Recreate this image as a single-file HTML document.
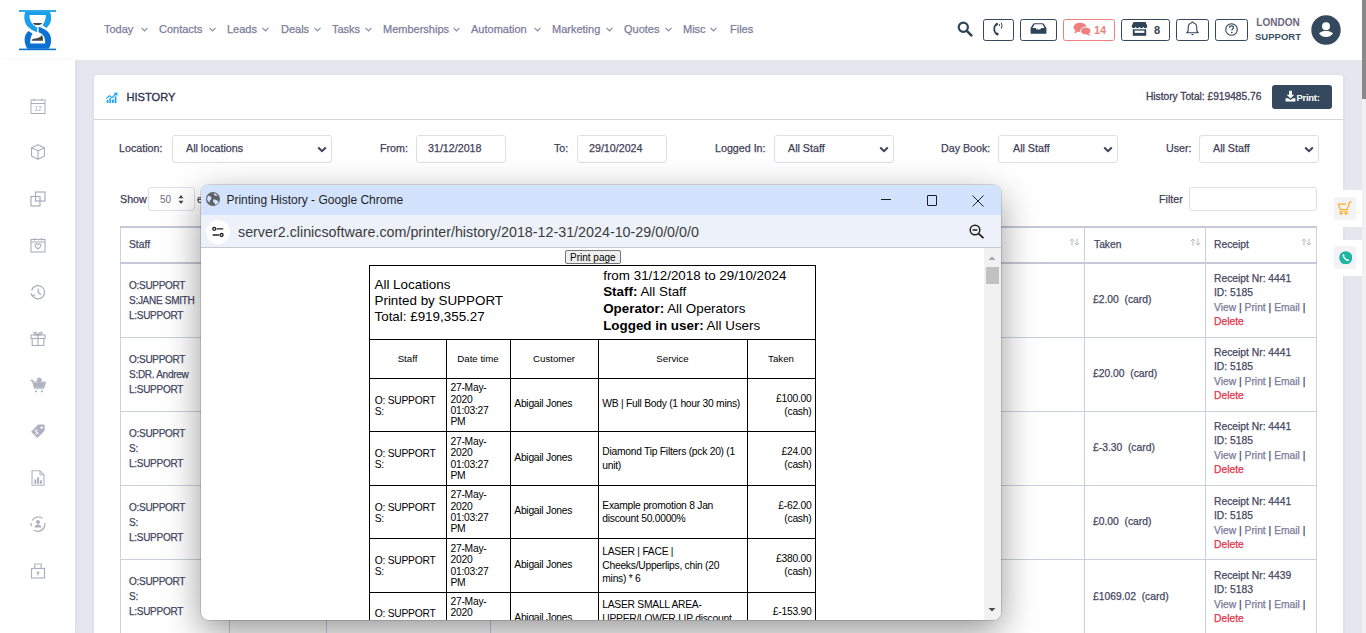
<!DOCTYPE html>
<html><head><meta charset="utf-8">
<style>
*{box-sizing:border-box;margin:0;padding:0}
html,body{width:1366px;height:633px;overflow:hidden}
body{position:relative;background:#e5e7ef;font-family:"Liberation Sans",sans-serif;color:#454862}
.abs{position:absolute}
#hdr{position:absolute;left:0;top:0;width:1362px;height:60px;background:#fff}
#side{position:absolute;left:0;top:60px;width:75px;height:573px;background:#fff;box-shadow:1px 0 4px rgba(60,60,90,0.06)}
#sb{position:absolute;left:1362px;top:0;width:4px;height:633px;background:#f1f1f1}
#sbt{position:absolute;left:1362px;top:0;width:4px;height:99px;background:#888}
.nav{position:absolute;top:23px;font-size:11px;color:#7b7c9b;-webkit-text-stroke:0.25px #7b7c9b;white-space:nowrap;line-height:12px}
.chev{position:absolute;top:27px;width:7px;height:5px}
.hbox{position:absolute;top:19px;height:22px;border:1.5px solid #34495e;border-radius:2.5px}
.card{position:absolute;left:94px;top:75px;width:1249px;height:600px;background:#fff;border-radius:3px;box-shadow:0 0 4px rgba(60,60,90,0.07)}
.lbl{position:absolute;font-size:10.7px;color:#3f4158;-webkit-text-stroke:0.25px currentColor;white-space:nowrap;line-height:12px}
.inp{position:absolute;top:135px;height:28px;border:1px solid #dcdfe8;border-radius:3px;background:#fff}
.inp span{position:absolute;top:6px;font-size:10.7px;color:#3f4158;-webkit-text-stroke:0.25px currentColor;white-space:nowrap;line-height:12px}
.selchev{position:absolute;top:10px;width:10px;height:7px}
.vl{position:absolute;width:1px;background:#cbcfdb}
.hl{position:absolute;height:1px;background:#cbcfdb}
.cell{position:absolute;font-size:10px;letter-spacing:-0.28px;line-height:14.9px;color:#454862;-webkit-text-stroke:0.25px currentColor;white-space:nowrap}
.rc{position:absolute;font-size:10.3px;line-height:14.6px;color:#454862;-webkit-text-stroke:0.25px currentColor;white-space:nowrap}
.rc .lk{color:#7b7c9b;-webkit-text-stroke:0.25px #7b7c9b}
.rc .dl{color:#e2334b;-webkit-text-stroke:0.25px #e2334b}
.sic{position:absolute;left:30px;width:16px;height:16px}
</style></head><body>
<div id="hdr"></div>
<div id="side"></div>
<div id="sb"></div><div id="sbt"></div>

<!-- logo -->
<svg class="abs" style="left:18px;top:8px" width="40" height="44" viewBox="0 0 40 44">
  <rect x="1" y="2.1" width="37" height="1.8" fill="#1b9fe9"/>
  <rect x="1" y="40.6" width="37" height="1.6" fill="#0a70d1"/>
  <path fill-rule="evenodd" fill="#1b9fe9" d="M7.2 3.8 L31.8 3.8 C33.3 6.5 33.6 11 32.6 13.8 C31.7 16.5 30.2 18.5 28.4 20 L24.4 17.2 C26.8 14.5 27.8 11 27.8 7 L11.5 7 C11.5 11 12.5 14.5 15.5 17 C17 18.2 18.3 19 19.3 19.6 L19 24.2 C15 22.8 11 20.5 8.6 17.2 C6 13.5 5.8 7.5 7.2 3.8 Z"/>
  <path fill-rule="evenodd" fill="#0a70d1" d="M20.6 18.8 C25 20 29.5 22.5 31.6 26 C33.3 29 33.5 33 32.6 36.2 C32 38.3 31.3 39.7 30.6 40.7 L9.4 40.7 C8.7 39.7 8 38.3 7.4 36.2 C6.3 33 6.2 28 8.5 25.5 C9 24.6 9.8 23.7 10.5 23.1 L14.6 25.8 C12.9 28 12.2 31 12.2 35.5 L27.2 35.5 C27.2 31 26.5 28 24 26 C23 25.2 21.7 24.6 20.6 24.2 Z"/>
  <path d="M14.8 14.9 L24.2 14.9 C23.2 16.4 21.5 17.1 19.5 17.1 C17.5 17.1 15.8 16.4 14.8 14.9 Z" fill="#454545"/>
  <path d="M13.6 32.8 C13.9 31.4 15 30.9 17 30.6 C20 30.2 22.6 29.2 24 27 C24.8 28.8 25.1 30.8 25.1 32.8 Z" fill="#454545"/>
</svg>

<!-- nav -->
<div class="nav" style="left:104px">Today</div>
<div class="nav" style="left:159px">Contacts</div>
<div class="nav" style="left:227px">Leads</div>
<div class="nav" style="left:281px">Deals</div>
<div class="nav" style="left:332px">Tasks</div>
<div class="nav" style="left:383px">Memberships</div>
<div class="nav" style="left:471px">Automation</div>
<div class="nav" style="left:552px">Marketing</div>
<div class="nav" style="left:624px">Quotes</div>
<div class="nav" style="left:683px">Misc</div>
<div class="nav" style="left:730px">Files</div>
<svg class="chev" style="left:141px" viewBox="0 0 7 5"><path d="M0.5 0.8 L3.5 3.8 L6.5 0.8" fill="none" stroke="#8a8ba6" stroke-width="1.2"/></svg>
<svg class="chev" style="left:209px" viewBox="0 0 7 5"><path d="M0.5 0.8 L3.5 3.8 L6.5 0.8" fill="none" stroke="#8a8ba6" stroke-width="1.2"/></svg>
<svg class="chev" style="left:262px" viewBox="0 0 7 5"><path d="M0.5 0.8 L3.5 3.8 L6.5 0.8" fill="none" stroke="#8a8ba6" stroke-width="1.2"/></svg>
<svg class="chev" style="left:314px" viewBox="0 0 7 5"><path d="M0.5 0.8 L3.5 3.8 L6.5 0.8" fill="none" stroke="#8a8ba6" stroke-width="1.2"/></svg>
<svg class="chev" style="left:365px" viewBox="0 0 7 5"><path d="M0.5 0.8 L3.5 3.8 L6.5 0.8" fill="none" stroke="#8a8ba6" stroke-width="1.2"/></svg>
<svg class="chev" style="left:453px" viewBox="0 0 7 5"><path d="M0.5 0.8 L3.5 3.8 L6.5 0.8" fill="none" stroke="#8a8ba6" stroke-width="1.2"/></svg>
<svg class="chev" style="left:534px" viewBox="0 0 7 5"><path d="M0.5 0.8 L3.5 3.8 L6.5 0.8" fill="none" stroke="#8a8ba6" stroke-width="1.2"/></svg>
<svg class="chev" style="left:606px" viewBox="0 0 7 5"><path d="M0.5 0.8 L3.5 3.8 L6.5 0.8" fill="none" stroke="#8a8ba6" stroke-width="1.2"/></svg>
<svg class="chev" style="left:665px" viewBox="0 0 7 5"><path d="M0.5 0.8 L3.5 3.8 L6.5 0.8" fill="none" stroke="#8a8ba6" stroke-width="1.2"/></svg>
<svg class="chev" style="left:710px" viewBox="0 0 7 5"><path d="M0.5 0.8 L3.5 3.8 L6.5 0.8" fill="none" stroke="#8a8ba6" stroke-width="1.2"/></svg>

<!-- HEADER_RIGHT -->
<svg class="abs" style="left:957px;top:21px" width="16" height="16" viewBox="0 0 16 16"><circle cx="6.3" cy="6.3" r="4.6" fill="none" stroke="#2f4358" stroke-width="2.2"/><path d="M9.6 9.6 L14.3 14.3" stroke="#2f4358" stroke-width="2.6" stroke-linecap="round"/></svg>
<div class="hbox" style="left:983px;width:31px"></div>
<div class="hbox" style="left:1020px;width:37px"></div>
<div class="hbox" style="left:1063px;width:52px;border-color:#f07f7f"></div>
<div class="hbox" style="left:1121px;width:49px"></div>
<div class="hbox" style="left:1176px;width:33px"></div>
<div class="hbox" style="left:1215px;width:33px"></div>
<!-- phone -->
<svg class="abs" style="left:992px;top:21px" width="14" height="16" viewBox="0 0 14 16"><path d="M4.6 3.2 C1.6 4.8 1.2 10.8 5 13.2" fill="none" stroke="#2f4358" stroke-width="1.7"/><ellipse cx="4.7" cy="3.3" rx="1.5" ry="1.3" transform="rotate(-30 4.7 3.3)" fill="#2f4358"/><ellipse cx="5.2" cy="13" rx="1.5" ry="1.3" transform="rotate(30 5.2 13)" fill="#2f4358"/><path d="M7.3 3.2 Q8.1 4 7.3 5 M9.3 1.8 Q10.8 4.6 9.3 7.6" fill="none" stroke="#2f4358" stroke-width="1"/></svg>
<!-- inbox -->
<svg class="abs" style="left:1030px;top:22px" width="17" height="14" viewBox="0 0 17 14"><path d="M4.5 1.2 L12.5 1.2 C13.2 1.2 13.6 1.5 13.9 2 L16.4 6 L16.4 11.8 L0.6 11.8 L0.6 6 L3.1 2 C3.4 1.5 3.8 1.2 4.5 1.2 Z" fill="#2f4358"/><path d="M4.6 2.3 L12.4 2.3 L14.6 6.1 L11.2 6.1 L10.3 7.6 L6.7 7.6 L5.8 6.1 L2.4 6.1 Z" fill="#fff"/></svg>
<!-- chat -->
<svg class="abs" style="left:1072px;top:21px" width="22" height="17" viewBox="0 0 22 17"><ellipse cx="8" cy="6.3" rx="6.5" ry="4.6" fill="#f07f7f"/><path d="M3.5 9.5 L2.2 12.5 L6.5 10.5 Z" fill="#f07f7f"/><ellipse cx="13.8" cy="10" rx="5.2" ry="3.9" fill="#f07f7f" stroke="#fff" stroke-width="1"/><path d="M16.5 12.5 L18.8 15.3 L14.5 13.5 Z" fill="#f07f7f"/></svg>
<div class="abs" style="left:1094px;top:24px;font-size:11px;font-weight:bold;line-height:12px;color:#f07f7f">14</div>
<!-- store -->
<svg class="abs" style="left:1131px;top:21px" width="17" height="16" viewBox="0 0 17 16"><path d="M2.5 1 L14.5 1 L16.3 5 C16.3 6.5 15.2 7.2 14.2 7.2 C13.2 7.2 12.6 6.5 12.4 5.8 C12.1 6.6 11.2 7.2 10.3 7.2 C9.4 7.2 8.7 6.6 8.5 5.8 C8.3 6.6 7.5 7.2 6.6 7.2 C5.7 7.2 4.9 6.6 4.7 5.8 C4.4 6.6 3.7 7.2 2.8 7.2 C1.8 7.2 0.7 6.5 0.7 5 Z" fill="#2f4358"/><path d="M1.8 8.3 L15.2 8.3 L15.2 14.8 L1.8 14.8 Z" fill="#2f4358"/><rect x="3.6" y="9.6" width="9.8" height="2.3" fill="#fff"/></svg>
<div class="abs" style="left:1154px;top:24px;font-size:11px;font-weight:bold;line-height:12px;color:#2f4358">8</div>
<!-- bell -->
<svg class="abs" style="left:1185px;top:21px" width="15" height="16" viewBox="0 0 15 16"><path d="M7.5 1 C7.9 1 8.2 1.3 8.2 1.8 C10.5 2.3 11.8 4.2 11.8 6.8 L11.8 9.8 L13.3 11.8 L1.7 11.8 L3.2 9.8 L3.2 6.8 C3.2 4.2 4.5 2.3 6.8 1.8 C6.8 1.3 7.1 1 7.5 1 Z" fill="none" stroke="#2f4358" stroke-width="1.1" stroke-linejoin="round"/><path d="M6 13 L9 13 L7.5 14.6 Z" fill="#2f4358"/></svg>
<!-- help -->
<svg class="abs" style="left:1224px;top:22px" width="15" height="15" viewBox="0 0 15 15"><circle cx="7.5" cy="7.5" r="5.8" fill="none" stroke="#2f4358" stroke-width="1.1"/><path d="M5.5 5.8 C5.5 4.4 6.4 3.8 7.5 3.8 C8.6 3.8 9.5 4.5 9.5 5.6 C9.5 6.9 7.8 7 7.8 8.6" fill="none" stroke="#2f4358" stroke-width="1.2"/><circle cx="7.8" cy="10.6" r="0.8" fill="#2f4358"/></svg>
<div class="abs" style="left:1253px;top:16.5px;width:50px;text-align:center;font-size:10px;font-weight:bold;line-height:12px;color:#6b6880">LONDON</div>
<div class="abs" style="left:1253px;top:31px;width:50px;text-align:center;font-size:9.5px;font-weight:bold;line-height:12px;color:#3d5166">SUPPORT</div>
<svg class="abs" style="left:1311px;top:15px" width="30" height="30" viewBox="0 0 30 30"><circle cx="15" cy="15" r="14.7" fill="#34495e"/><circle cx="15" cy="11.2" r="4" fill="#fff"/><path d="M8 18.5 C10 16.5 12 16 15 16 C18 16 20 16.5 22 18.5 C20 21 18 22 15 22 C12 22 10 21 8 18.5 Z" fill="#fff"/></svg>

<!-- SIDEBAR -->
<svg class="sic" style="top:98px" viewBox="0 0 16 16" fill="none" stroke="#a9adbd" stroke-width="1"><rect x="1" y="2" width="14" height="13.5"/><path d="M1 5.5 H15 M4 0.5 V3 M12 0.5 V3"/><text x="8" y="13.3" font-size="6.5" text-anchor="middle" fill="#a9adbd" stroke="none" font-family="Liberation Sans">12</text></svg>
<svg class="sic" style="top:144px" viewBox="0 0 16 16" fill="none" stroke="#a9adbd" stroke-width="1.1" stroke-linejoin="round"><path d="M8 0.8 L14.5 3.8 L14.5 12 L8 15.2 L1.5 12 L1.5 3.8 Z M1.5 3.8 L8 6.8 L14.5 3.8 M8 6.8 V15.2"/></svg>
<svg class="sic" style="top:191px" viewBox="0 0 16 16" fill="none" stroke="#a9adbd" stroke-width="1.2"><rect x="1" y="5.5" width="9" height="9.5"/><rect x="5.5" y="1" width="9.5" height="9"/></svg>
<svg class="sic" style="top:237px" viewBox="0 0 16 16" fill="none" stroke="#a9adbd" stroke-width="1.1"><rect x="1" y="2.5" width="14" height="12.5"/><path d="M1 5 H15 M4.5 1 V3.5 M11.5 1 V3.5"/><path d="M8 12 C6 10.5 5 9.5 5 8.3 C5 7.3 5.8 6.8 6.5 6.8 C7.2 6.8 7.7 7.3 8 7.8 C8.3 7.3 8.8 6.8 9.5 6.8 C10.2 6.8 11 7.3 11 8.3 C11 9.5 10 10.5 8 12 Z"/></svg>
<svg class="sic" style="top:284px" viewBox="0 0 16 16" fill="none" stroke="#a9adbd" stroke-width="1.2"><path d="M2.2 11.5 A6.6 6.6 0 1 0 1.6 6.5"/><path d="M0.8 9.2 L2.2 12 L4.8 10.6" stroke-linejoin="round"/><path d="M8.3 4.5 V8.5 L11 10.8"/></svg>
<svg class="sic" style="top:330px" viewBox="0 0 16 16" fill="none" stroke="#a9adbd" stroke-width="1.1"><rect x="1" y="5" width="14" height="3.5"/><rect x="2.2" y="8.5" width="11.6" height="7"/><path d="M8 5 V15.5 M8 5 C6.5 2 3.5 1.5 4 3.5 C4.3 4.6 6.5 5 8 5 C9.5 5 11.7 4.6 12 3.5 C12.5 1.5 9.5 2 8 5"/></svg>
<svg class="sic" style="top:377px" viewBox="0 0 16 16"><path d="M0.5 3.5 H2.6 L4.6 11 H13.6 L15.3 5.2 H3.4" fill="none" stroke="#aeb1c1" stroke-width="1.3" stroke-linejoin="round"/><path d="M3.6 6 H14.6 L13.2 10.3 H4.7 Z" fill="#aeb1c1"/><circle cx="6" cy="14.3" r="1.1" fill="#aeb1c1"/><circle cx="12" cy="14.3" r="1.1" fill="#aeb1c1"/><circle cx="9.3" cy="3.2" r="2.1" fill="#aeb1c1"/><path d="M9.3 0.3 V6 M6.5 3.2 H12.1 M7.3 1.2 L11.3 5.2 M11.3 1.2 L7.3 5.2" stroke="#aeb1c1" stroke-width="0.9"/></svg>
<svg class="sic" style="top:423px" viewBox="0 0 16 16"><path d="M1 8.8 L7.5 2.3 C8 1.8 8.5 1.6 9.2 1.6 L13.6 1.6 C14.2 1.6 14.6 2 14.6 2.6 L14.6 7 C14.6 7.6 14.4 8.1 13.9 8.6 L7.4 15 Z" fill="#aeb1c1"/><circle cx="11.6" cy="4.6" r="1.2" fill="#fff"/><path d="M5 10.5 C6 11.5 7.6 11 7.4 9.8 C7.2 8.8 5.8 9.2 5.6 8.2 C5.4 7 7 6.5 8 7.5 M4.6 7.2 L8.6 11" fill="none" stroke="#fff" stroke-width="0.9"/></svg>
<svg class="sic" style="top:470px" viewBox="0 0 16 16"><path d="M2 0.8 H10 L14 4.8 V15.3 H2 Z" fill="none" stroke="#aeb1c1" stroke-width="1.1" stroke-linejoin="round"/><path d="M10 0.8 V4.8 H14" fill="none" stroke="#aeb1c1" stroke-width="1"/><rect x="4.3" y="9.5" width="2" height="4.3" fill="#aeb1c1"/><rect x="7.1" y="7.3" width="2" height="6.5" fill="#aeb1c1"/><rect x="9.9" y="10.3" width="2" height="3.5" fill="#aeb1c1"/></svg>
<svg class="sic" style="top:516px" viewBox="0 0 16 16"><path d="M2.2 4.5 A6.8 6.8 0 0 1 12.5 2.5 M14.6 7 A6.8 6.8 0 0 1 4 14 M1.4 10 A6.8 6.8 0 0 1 1.3 7" fill="none" stroke="#aeb1c1" stroke-width="1.3"/><circle cx="8" cy="6" r="2" fill="#aeb1c1"/><path d="M4.6 11.4 C4.8 9.4 6.2 8.6 8 8.6 C9.8 8.6 11.2 9.4 11.4 11.4 Z" fill="#aeb1c1"/></svg>
<svg class="sic" style="top:563px" viewBox="0 0 16 16" fill="none" stroke="#aeb1c1" stroke-width="1.2"><rect x="1.5" y="5.5" width="13" height="9.5"/><path d="M4.8 5.5 V1 H11.2 V5.5"/><path d="M8 12.5 V8.8 M6.6 10.2 L8 8.8 L9.4 10.2" stroke-width="1.1"/></svg>

<!-- CARD -->
<div class="card"></div>
<div class="hl" style="left:94px;top:119px;width:1249px;background:#d3d6e0"></div>
<svg class="abs" style="left:104.5px;top:91.8px" width="14" height="11.5" viewBox="0 0 15 13"><path d="M1 7.5 L4.5 4.3 L7.5 6.5 L12 2" fill="none" stroke="#1aa3f5" stroke-width="1.3"/><path d="M9.5 0.8 L13.8 0.5 L13.5 4.8 Z" fill="#1aa3f5"/><rect x="1.5" y="9" width="2" height="3.8" fill="#1aa3f5"/><rect x="4.5" y="7" width="2" height="5.8" fill="#1aa3f5"/><rect x="7.5" y="8.5" width="2" height="4.3" fill="#1aa3f5"/><rect x="10.5" y="5" width="2" height="7.8" fill="#1aa3f5"/></svg>
<div class="abs" style="left:126.5px;top:90.8px;font-size:11.1px;line-height:13px;color:#2f3150;-webkit-text-stroke:0.35px #2f3150">HISTORY</div>
<div class="abs" style="left:1146px;top:91px;font-size:10.2px;line-height:12px;color:#3f4158;-webkit-text-stroke:0.3px #3f4158">History Total: £919485.76</div>
<div class="abs" style="left:1272px;top:85px;width:60px;height:23.5px;background:#34495e;border-radius:3px"></div>
<svg class="abs" style="left:1285px;top:90px" width="11" height="12" viewBox="0 0 11 12"><path d="M4.1 0.8 H6.9 V4.8 H9.3 L5.5 8.6 L1.7 4.8 H4.1 Z" fill="#fff"/><path d="M0.6 8.2 H3 L5.5 10 L8 8.2 H10.4 V11.5 H0.6 Z" fill="#fff"/></svg>
<div class="abs" style="left:1296.5px;top:91.5px;font-size:9.5px;font-weight:bold;letter-spacing:-0.3px;line-height:12px;color:#fff">Print:</div>

<div class="lbl" style="left:119px;top:142px">Location:</div>
<div class="inp" style="left:172px;width:160px"><span style="left:13px">All locations</span><svg class="selchev" style="left:144px" viewBox="0 0 10 7"><path d="M1.2 1.5 L5 5.2 L8.8 1.5" fill="none" stroke="#3f4158" stroke-width="2"/></svg></div>
<div class="lbl" style="left:380px;top:142px">From:</div>
<div class="inp" style="left:416px;width:90px"><span style="left:11px">31/12/2018</span></div>
<div class="lbl" style="left:554px;top:142px">To:</div>
<div class="inp" style="left:577px;width:90px"><span style="left:11px">29/10/2024</span></div>
<div class="lbl" style="left:715px;top:142px">Logged In:</div>
<div class="inp" style="left:774px;width:120px"><span style="left:13px">All Staff</span><svg class="selchev" style="left:104px" viewBox="0 0 10 7"><path d="M1.2 1.5 L5 5.2 L8.8 1.5" fill="none" stroke="#3f4158" stroke-width="2"/></svg></div>
<div class="lbl" style="left:941px;top:142px">Day Book:</div>
<div class="inp" style="left:998px;width:120px"><span style="left:14px">All Staff</span><svg class="selchev" style="left:104px" viewBox="0 0 10 7"><path d="M1.2 1.5 L5 5.2 L8.8 1.5" fill="none" stroke="#3f4158" stroke-width="2"/></svg></div>
<div class="lbl" style="left:1166px;top:142px">User:</div>
<div class="inp" style="left:1199px;width:120px"><span style="left:13px">All Staff</span><svg class="selchev" style="left:104px" viewBox="0 0 10 7"><path d="M1.2 1.5 L5 5.2 L8.8 1.5" fill="none" stroke="#3f4158" stroke-width="2"/></svg></div>

<div class="lbl" style="left:120px;top:193px">Show</div>
<div class="inp" style="left:148px;top:187px;width:47px;height:24px"><span style="left:11px;top:5.5px;font-size:10px;color:#6a6d80;-webkit-text-stroke:0">50</span><svg class="abs" style="left:29px;top:6px" width="6" height="11" viewBox="0 0 6 11"><path d="M0.5 4.3 L3 1 L5.5 4.3 Z M0.5 6.7 L3 10 L5.5 6.7 Z" fill="#3f4158"/></svg></div>
<div class="lbl" style="left:197px;top:193px">entries</div>
<div class="lbl" style="left:1159px;top:193px">Filter</div>
<div class="inp" style="left:1189px;top:187px;width:128px;height:23.5px"></div>

<!-- app table -->
<div class="abs" style="left:120px;top:226px;width:1197px;height:420px;border-left:1px solid #cfd2de;border-right:1px solid #cfd2de"></div>
<div class="hl" style="left:120px;top:226px;width:1197px;height:2px;background:#c5c8d6"></div>
<div class="hl" style="left:120px;top:262px;width:1197px;height:2px;background:#c5c8d6"></div>
<div class="hl" style="left:120px;top:337px;width:1197px"></div>
<div class="hl" style="left:120px;top:411px;width:1197px"></div>
<div class="hl" style="left:120px;top:485px;width:1197px"></div>
<div class="hl" style="left:120px;top:559px;width:1197px"></div>
<div class="vl" style="left:229px;top:226px;height:420px"></div>
<div class="vl" style="left:326px;top:226px;height:420px"></div>
<div class="vl" style="left:490px;top:226px;height:420px"></div>
<div class="vl" style="left:1084px;top:226px;height:420px"></div>
<div class="vl" style="left:1205px;top:226px;height:420px"></div>
<div class="lbl" style="left:129px;top:238.5px;font-size:10.3px;color:#454862">Staff</div>
<div class="lbl" style="left:1094px;top:238.5px;font-size:10.3px;color:#454862">Taken</div>
<div class="lbl" style="left:1214px;top:238.5px;font-size:10.3px;color:#454862">Receipt</div>
<svg class="abs" style="left:1069px;top:238px" width="11" height="8" viewBox="0 0 11 8"><path d="M3 7.5 V1 M0.8 3.2 L3 1 L5.2 3.2 M8 0.5 V7 M5.8 4.8 L8 7 L10.2 4.8" fill="none" stroke="#b6b9c6" stroke-width="1"/></svg>
<svg class="abs" style="left:1190px;top:238px" width="11" height="8" viewBox="0 0 11 8"><path d="M3 7.5 V1 M0.8 3.2 L3 1 L5.2 3.2 M8 0.5 V7 M5.8 4.8 L8 7 L10.2 4.8" fill="none" stroke="#b6b9c6" stroke-width="1"/></svg>
<svg class="abs" style="left:1301px;top:238px" width="11" height="8" viewBox="0 0 11 8"><path d="M3 7.5 V1 M0.8 3.2 L3 1 L5.2 3.2 M8 0.5 V7 M5.8 4.8 L8 7 L10.2 4.8" fill="none" stroke="#b6b9c6" stroke-width="1"/></svg>

<div class="cell" style="left:129px;top:279px">O:SUPPORT<br>S:JANE SMITH<br>L:SUPPORT</div>
<div class="cell" style="left:129px;top:353px">O:SUPPORT<br>S:DR. Andrew<br>L:SUPPORT</div>
<div class="cell" style="left:129px;top:427px">O:SUPPORT<br>S:<br>L:SUPPORT</div>
<div class="cell" style="left:129px;top:501px">O:SUPPORT<br>S:<br>L:SUPPORT</div>
<div class="cell" style="left:129px;top:575px">O:SUPPORT<br>S:<br>L:SUPPORT</div>

<div class="rc" style="left:1093px;top:293px">£2.00&nbsp; (card)</div>
<div class="rc" style="left:1093px;top:367px">£20.00&nbsp; (card)</div>
<div class="rc" style="left:1093px;top:441px">£-3.30&nbsp; (card)</div>
<div class="rc" style="left:1093px;top:515px">£0.00&nbsp; (card)</div>
<div class="rc" style="left:1093px;top:590px">£1069.02&nbsp; (card)</div>

<div class="rc" style="left:1214px;top:271.5px">Receipt Nr: 4441<br>ID: 5185<br><span class="lk">View</span> | <span class="lk">Print</span> | <span class="lk">Email</span> |<br><span class="dl">Delete</span></div>
<div class="rc" style="left:1214px;top:345.5px">Receipt Nr: 4441<br>ID: 5185<br><span class="lk">View</span> | <span class="lk">Print</span> | <span class="lk">Email</span> |<br><span class="dl">Delete</span></div>
<div class="rc" style="left:1214px;top:419.5px">Receipt Nr: 4441<br>ID: 5185<br><span class="lk">View</span> | <span class="lk">Print</span> | <span class="lk">Email</span> |<br><span class="dl">Delete</span></div>
<div class="rc" style="left:1214px;top:494.5px">Receipt Nr: 4441<br>ID: 5185<br><span class="lk">View</span> | <span class="lk">Print</span> | <span class="lk">Email</span> |<br><span class="dl">Delete</span></div>
<div class="rc" style="left:1214px;top:568.5px">Receipt Nr: 4439<br>ID: 5183<br><span class="lk">View</span> | <span class="lk">Print</span> | <span class="lk">Email</span> |<br><span class="dl">Delete</span></div>

<!-- floating widgets -->
<div class="abs" style="left:1328px;top:190px;width:34px;height:37px;background:#fff;border-radius:3px 0 0 3px"></div>
<div class="abs" style="left:1334px;top:197px;width:22px;height:23px;background:#f2f2f7;border-radius:3px"></div>
<svg class="abs" style="left:1337px;top:201px" width="16" height="15" viewBox="0 0 16 15"><path d="M0.8 3.2 H9.2 M1.2 3.2 L3.4 8.6 H10.2 L12.6 1.2 H14.6" fill="none" stroke="#ffad1f" stroke-width="1.2" stroke-linejoin="round"/><circle cx="4.2" cy="11.6" r="1.3" fill="none" stroke="#ffad1f" stroke-width="1.1"/><circle cx="9" cy="11.6" r="1.3" fill="none" stroke="#ffad1f" stroke-width="1.1"/><path d="M4.2 12.9 V13.9 M9 12.9 V13.9" stroke="#ffad1f" stroke-width="1"/></svg>
<div class="abs" style="left:1328px;top:239.5px;width:34px;height:36.5px;background:#fff;border-radius:3px 0 0 3px"></div>
<div class="abs" style="left:1334px;top:246px;width:22px;height:23px;background:#f2f2f7;border-radius:3px"></div>
<svg class="abs" style="left:1338.5px;top:250.5px" width="13.5" height="13.5" viewBox="0 0 14 14"><circle cx="7" cy="7" r="6.8" fill="#1fb5a3"/><path d="M4.5 3.2 C4 3.5 3.5 4 3.7 5 C4.2 7.2 6.5 9.8 8.8 10.4 C9.8 10.6 10.3 10.1 10.6 9.6 L9.3 8.3 C9 8.5 8.6 8.8 8.2 8.6 C7.2 8 6 6.8 5.5 5.8 C5.3 5.4 5.6 5 5.8 4.7 Z" fill="#fff"/></svg>

<!-- POPUP -->
<div id="pop" class="abs" style="left:201px;top:185px;width:800px;height:435px;border-radius:8px;overflow:hidden;background:#fff;box-shadow:0 12px 36px rgba(0,0,0,0.41),0 0 0 1px rgba(0,0,0,0.13)">
<div class="abs" style="left:0;top:0;width:800px;height:30px;background:#d3e3fd"></div>
<svg class="abs" style="left:5px;top:7px" width="14" height="14" viewBox="0 0 14 14"><circle cx="7" cy="7" r="7" fill="#5f6368"/><path d="M2.2 3.8 C3.6 3.6 4.6 4.4 5.2 5.4 C5.8 6.4 5 7.4 4.2 8 C3.5 8.5 3.6 9.6 3.8 10.8 C2.4 10 1.2 8.5 1 6.8 Z M8 1.2 C9.6 1.6 10.8 2.4 11.6 3.6 C10.6 4 9.4 3.8 8.6 3.2 C8 2.8 7.8 2 8 1.2 Z M7.5 7.6 C8.6 7.2 10 7.6 11 8.4 C11.8 9 12.4 9.6 12.8 9.4 C12.2 11 10.9 12.3 9.2 12.8 C9.2 11.8 8.6 11 7.8 10.4 C7 9.8 6.8 8.2 7.5 7.6 Z" fill="#d3e3fd"/></svg>
<div class="abs" style="left:25.4px;top:8px;font-size:12px;line-height:14px;color:#1f1f1f;white-space:nowrap">Printing History - Google Chrome</div>
<div class="abs" style="left:679.5px;top:14px;width:10.5px;height:1px;background:#1f1f1f"></div>
<div class="abs" style="left:725.5px;top:10px;width:10.5px;height:10.5px;border:1px solid #1f1f1f;border-radius:1px"></div>
<svg class="abs" style="left:771px;top:9.5px" width="12" height="12" viewBox="0 0 12 12"><path d="M0.5 0.5 L11.5 11.5 M11.5 0.5 L0.5 11.5" stroke="#1f1f1f" stroke-width="1"/></svg>
<div class="abs" style="left:0;top:30px;width:800px;height:32px;background:#edf2fa"></div>
<div class="abs" style="left:0;top:62px;width:800px;height:1px;background:#c7c9cc"></div>
<div class="abs" style="left:5px;top:35px;width:24px;height:24px;border-radius:12px;background:#fff"></div>
<svg class="abs" style="left:10px;top:40px" width="14" height="14" viewBox="0 0 14 14" fill="none" stroke="#1f1f1f" stroke-width="1.3"><circle cx="3.2" cy="3.8" r="1.5"/><path d="M5.6 3.8 H12.2"/><circle cx="10.6" cy="10" r="1.5"/><path d="M1.6 10 H8.2"/></svg>
<div class="abs" style="left:37px;top:39px;font-size:14.3px;line-height:17px;color:#3b3b3b;white-space:nowrap">server2.clinicsoftware.com/printer/history/2018-12-31/2024-10-29/0/0/0/0</div>
<svg class="abs" style="left:768px;top:39px" width="16" height="15" viewBox="0 0 16 15" fill="none" stroke="#1f1f1f" stroke-width="1.5"><circle cx="6" cy="6" r="4.8"/><path d="M3.6 6 H8.4"/><path d="M9.6 9.6 L14.5 14.2" stroke-width="1.8"/></svg>
<div class="abs" style="left:783px;top:63px;width:17px;height:372px;background:#f1f1f1"></div>
<svg class="abs" style="left:786px;top:70px" width="10" height="6" viewBox="0 0 10 6"><path d="M1.5 5 L5 1.5 L8.5 5 Z" fill="#a3a3a3"/></svg>
<div class="abs" style="left:785px;top:82px;width:13px;height:17px;background:#c1c1c1"></div>
<svg class="abs" style="left:786px;top:422px" width="10" height="6" viewBox="0 0 10 6"><path d="M1.5 1 L5 4.5 L8.5 1 Z" fill="#505050"/></svg>
<div class="abs" style="left:363.5px;top:65.3px;width:56px;height:14px;background:#efefef;border:1px solid #767676;border-radius:2px"></div>
<div class="abs" style="left:369px;top:67px;font-size:10px;line-height:11px;color:#000;white-space:nowrap">Print page</div>
<div class="abs" style="left:168px;top:80px;width:447px;height:1px;background:#000"></div>
<div class="abs" style="left:168px;top:154px;width:447px;height:1px;background:#000"></div>
<div class="abs" style="left:168px;top:193px;width:447px;height:1px;background:#000"></div>
<div class="abs" style="left:168px;top:246px;width:447px;height:1px;background:#000"></div>
<div class="abs" style="left:168px;top:300px;width:447px;height:1px;background:#000"></div>
<div class="abs" style="left:168px;top:353px;width:447px;height:1px;background:#000"></div>
<div class="abs" style="left:168px;top:407px;width:447px;height:1px;background:#000"></div>
<div class="abs" style="left:168px;top:80px;width:1px;height:435px;background:#000"></div>
<div class="abs" style="left:614px;top:80px;width:1px;height:435px;background:#000"></div>
<div class="abs" style="left:245px;top:154px;width:1px;height:361px;background:#000"></div>
<div class="abs" style="left:309px;top:154px;width:1px;height:361px;background:#000"></div>
<div class="abs" style="left:397px;top:154px;width:1px;height:361px;background:#000"></div>
<div class="abs" style="left:546px;top:154px;width:1px;height:361px;background:#000"></div>
<div class="abs" style="left:173.5px;top:92.2px;white-space:nowrap;font-size:13.4px;line-height:16px;color:#000">All Locations<br>Printed by SUPPORT<br>Total: £919,355.27</div>
<div class="abs" style="left:402.2px;top:82.7px;white-space:nowrap;font-size:13.4px;line-height:16.75px;color:#000">from 31/12/2018 to 29/10/2024<br><b>Staff:</b> All Staff<br><b>Operator:</b> All Operators<br><b>Logged in user:</b> All Users</div>
<div class="abs" style="left:168px;top:168.2px;width:77px;text-align:center;font-size:9.7px;line-height:11px;color:#000;white-space:nowrap">Staff</div>
<div class="abs" style="left:245px;top:168.2px;width:64px;text-align:center;font-size:9.7px;line-height:11px;color:#000;white-space:nowrap">Date time</div>
<div class="abs" style="left:309px;top:168.2px;width:88px;text-align:center;font-size:9.7px;line-height:11px;color:#000;white-space:nowrap">Customer</div>
<div class="abs" style="left:397px;top:168.2px;width:149px;text-align:center;font-size:9.7px;line-height:11px;color:#000;white-space:nowrap">Service</div>
<div class="abs" style="left:546px;top:168.2px;width:68px;text-align:center;font-size:9.7px;line-height:11px;color:#000;white-space:nowrap">Taken</div>
<div class="abs" style="left:169px;top:194.2px;width:76px;height:53px;display:flex;align-items:center;justify-content:flex-start;padding:0 0 0 4.7px;text-align:left;line-height:11.1px;font-size:10.3px;letter-spacing:-0.26px;color:#000;white-space:nowrap"><div>O: SUPPORT<br>S:</div></div>
<div class="abs" style="left:246px;top:193.5px;width:63px;height:53px;display:flex;align-items:center;justify-content:flex-start;padding:0 0 0 3.5px;text-align:left;line-height:11.3px;font-size:10.3px;letter-spacing:-0.26px;color:#000;white-space:nowrap"><div>27-May-<br>2020<br>01:03:27<br>PM</div></div>
<div class="abs" style="left:310px;top:192.5px;width:87px;height:53px;display:flex;align-items:center;justify-content:flex-start;padding:0 0 0 3.3px;text-align:left;line-height:13.4px;font-size:10.3px;letter-spacing:-0.26px;color:#000;white-space:nowrap"><div>Abigail Jones</div></div>
<div class="abs" style="left:398px;top:192.5px;width:148px;height:53px;display:flex;align-items:center;justify-content:flex-start;padding:0 0 0 3.3px;text-align:left;line-height:13.4px;font-size:10.3px;letter-spacing:-0.26px;color:#000;white-space:nowrap"><div>WB | Full Body (1 hour 30 mins)</div></div>
<div class="abs" style="left:547px;top:193.0px;width:67px;height:53px;display:flex;align-items:center;justify-content:flex-end;padding:0 3.6px 0 0;text-align:right;line-height:13px;font-size:10.3px;letter-spacing:-0.26px;color:#000;white-space:nowrap"><div>£100.00<br>(cash)</div></div>
<div class="abs" style="left:169px;top:247.2px;width:76px;height:54px;display:flex;align-items:center;justify-content:flex-start;padding:0 0 0 4.7px;text-align:left;line-height:11.1px;font-size:10.3px;letter-spacing:-0.26px;color:#000;white-space:nowrap"><div>O: SUPPORT<br>S:</div></div>
<div class="abs" style="left:246px;top:246.5px;width:63px;height:54px;display:flex;align-items:center;justify-content:flex-start;padding:0 0 0 3.5px;text-align:left;line-height:11.3px;font-size:10.3px;letter-spacing:-0.26px;color:#000;white-space:nowrap"><div>27-May-<br>2020<br>01:03:27<br>PM</div></div>
<div class="abs" style="left:310px;top:245.5px;width:87px;height:54px;display:flex;align-items:center;justify-content:flex-start;padding:0 0 0 3.3px;text-align:left;line-height:13.4px;font-size:10.3px;letter-spacing:-0.26px;color:#000;white-space:nowrap"><div>Abigail Jones</div></div>
<div class="abs" style="left:398px;top:246.5px;width:148px;height:54px;display:flex;align-items:center;justify-content:flex-start;padding:0 0 0 3.3px;text-align:left;line-height:13.4px;font-size:10.3px;letter-spacing:-0.26px;color:#000;white-space:nowrap"><div>Diamond Tip Filters (pck 20) (1<br>unit)</div></div>
<div class="abs" style="left:547px;top:246.0px;width:67px;height:54px;display:flex;align-items:center;justify-content:flex-end;padding:0 3.6px 0 0;text-align:right;line-height:13px;font-size:10.3px;letter-spacing:-0.26px;color:#000;white-space:nowrap"><div>£24.00<br>(cash)</div></div>
<div class="abs" style="left:169px;top:301.2px;width:76px;height:53px;display:flex;align-items:center;justify-content:flex-start;padding:0 0 0 4.7px;text-align:left;line-height:11.1px;font-size:10.3px;letter-spacing:-0.26px;color:#000;white-space:nowrap"><div>O: SUPPORT<br>S:</div></div>
<div class="abs" style="left:246px;top:300.5px;width:63px;height:53px;display:flex;align-items:center;justify-content:flex-start;padding:0 0 0 3.5px;text-align:left;line-height:11.3px;font-size:10.3px;letter-spacing:-0.26px;color:#000;white-space:nowrap"><div>27-May-<br>2020<br>01:03:27<br>PM</div></div>
<div class="abs" style="left:310px;top:299.5px;width:87px;height:53px;display:flex;align-items:center;justify-content:flex-start;padding:0 0 0 3.3px;text-align:left;line-height:13.4px;font-size:10.3px;letter-spacing:-0.26px;color:#000;white-space:nowrap"><div>Abigail Jones</div></div>
<div class="abs" style="left:398px;top:300.5px;width:148px;height:53px;display:flex;align-items:center;justify-content:flex-start;padding:0 0 0 3.3px;text-align:left;line-height:13.4px;font-size:10.3px;letter-spacing:-0.26px;color:#000;white-space:nowrap"><div>Example promotion 8 Jan<br>discount 50.0000%</div></div>
<div class="abs" style="left:547px;top:300.0px;width:67px;height:53px;display:flex;align-items:center;justify-content:flex-end;padding:0 3.6px 0 0;text-align:right;line-height:13px;font-size:10.3px;letter-spacing:-0.26px;color:#000;white-space:nowrap"><div>£-62.00<br>(cash)</div></div>
<div class="abs" style="left:169px;top:354.2px;width:76px;height:54px;display:flex;align-items:center;justify-content:flex-start;padding:0 0 0 4.7px;text-align:left;line-height:11.1px;font-size:10.3px;letter-spacing:-0.26px;color:#000;white-space:nowrap"><div>O: SUPPORT<br>S:</div></div>
<div class="abs" style="left:246px;top:353.5px;width:63px;height:54px;display:flex;align-items:center;justify-content:flex-start;padding:0 0 0 3.5px;text-align:left;line-height:11.3px;font-size:10.3px;letter-spacing:-0.26px;color:#000;white-space:nowrap"><div>27-May-<br>2020<br>01:03:27<br>PM</div></div>
<div class="abs" style="left:310px;top:352.5px;width:87px;height:54px;display:flex;align-items:center;justify-content:flex-start;padding:0 0 0 3.3px;text-align:left;line-height:13.4px;font-size:10.3px;letter-spacing:-0.26px;color:#000;white-space:nowrap"><div>Abigail Jones</div></div>
<div class="abs" style="left:398px;top:353.5px;width:148px;height:54px;display:flex;align-items:center;justify-content:flex-start;padding:0 0 0 3.3px;text-align:left;line-height:13.4px;font-size:10.3px;letter-spacing:-0.26px;color:#000;white-space:nowrap"><div>LASER | FACE |<br>Cheeks/Upperlips, chin (20<br>mins) * 6</div></div>
<div class="abs" style="left:547px;top:353.0px;width:67px;height:54px;display:flex;align-items:center;justify-content:flex-end;padding:0 3.6px 0 0;text-align:right;line-height:13px;font-size:10.3px;letter-spacing:-0.26px;color:#000;white-space:nowrap"><div>£380.00<br>(cash)</div></div>
<div class="abs" style="left:169px;top:407.2px;width:76px;height:54px;display:flex;align-items:center;justify-content:flex-start;padding:0 0 0 4.7px;text-align:left;line-height:11.1px;font-size:10.3px;letter-spacing:-0.26px;color:#000;white-space:nowrap"><div>O: SUPPORT<br>S:</div></div>
<div class="abs" style="left:246px;top:406.5px;width:63px;height:54px;display:flex;align-items:center;justify-content:flex-start;padding:0 0 0 3.5px;text-align:left;line-height:11.3px;font-size:10.3px;letter-spacing:-0.26px;color:#000;white-space:nowrap"><div>27-May-<br>2020<br>01:03:27<br>PM</div></div>
<div class="abs" style="left:310px;top:405.5px;width:87px;height:54px;display:flex;align-items:center;justify-content:flex-start;padding:0 0 0 3.3px;text-align:left;line-height:13.4px;font-size:10.3px;letter-spacing:-0.26px;color:#000;white-space:nowrap"><div>Abigail Jones</div></div>
<div class="abs" style="left:398px;top:406.5px;width:148px;height:54px;display:flex;align-items:center;justify-content:flex-start;padding:0 0 0 3.3px;text-align:left;line-height:13.4px;font-size:10.3px;letter-spacing:-0.26px;color:#000;white-space:nowrap"><div>LASER SMALL AREA-<br>UPPER/LOWER LIP discount<br>50.0000% * 1</div></div>
<div class="abs" style="left:547px;top:406.0px;width:67px;height:54px;display:flex;align-items:center;justify-content:flex-end;padding:0 3.6px 0 0;text-align:right;line-height:13px;font-size:10.3px;letter-spacing:-0.26px;color:#000;white-space:nowrap"><div>£-153.90<br>(cash)</div></div>
</div>
</body></html>
